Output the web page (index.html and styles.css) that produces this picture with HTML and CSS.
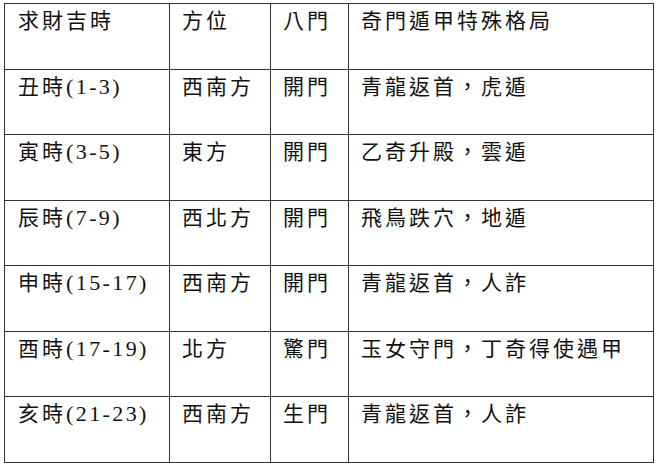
FILE: index.html
```html
<!DOCTYPE html>
<html lang="zh-Hant">
<head>
<meta charset="utf-8">
<title>求財吉時</title>
<link rel="stylesheet" href="styles.css">
</head>
<body>
<table class="grid">
  <colgroup>
    <col class="c-time">
    <col class="c-dir">
    <col class="c-gate">
    <col class="c-pattern">
  </colgroup>
  <tr><td>求財吉時</td><td>方位</td><td>八門</td><td>奇門遁甲特殊格局</td></tr>
  <tr><td>丑時<span class="num">(1-3)</span></td><td>西南方</td><td>開門</td><td>青龍返首，虎遁</td></tr>
  <tr><td>寅時<span class="num">(3-5)</span></td><td>東方</td><td>開門</td><td>乙奇升殿，雲遁</td></tr>
  <tr><td>辰時<span class="num">(7-9)</span></td><td>西北方</td><td>開門</td><td>飛鳥跌穴，地遁</td></tr>
  <tr><td>申時<span class="num">(15-17)</span></td><td>西南方</td><td>開門</td><td>青龍返首，人詐</td></tr>
  <tr><td>酉時<span class="num">(17-19)</span></td><td>北方</td><td>驚門</td><td>玉女守門，丁奇得使遇甲</td></tr>
  <tr><td>亥時<span class="num">(21-23)</span></td><td>西南方</td><td>生門</td><td>青龍返首，人詐</td></tr>
</table>
</body>
</html>
```

FILE: styles.css
```css
html, body {
  margin: 0;
  padding: 0;
  background: #ffffff;
}

body {
  padding: 3px 0 0 4px;
  font-family: "Liberation Serif", "Noto Sans CJK TC", serif;
  color: #111111;
}

.grid {
  border-collapse: collapse;
  table-layout: fixed;
  width: 649px;
  height: 460px;
}

.c-time { width: 165px; }
.c-dir { width: 101px; }
.c-gate { width: 78px; }
.c-pattern { width: 305px; }

.grid td {
  border: 1px solid #333333;
  vertical-align: top;
  padding: 3px 0 0 12px;
  font-family: "Liberation Serif", "Noto Sans CJK TC", serif;
  font-size: 21px;
  line-height: 28px;
  letter-spacing: 3px;
  white-space: nowrap;
}

.grid td:first-child {
  padding-left: 13px;
}

.num {
  letter-spacing: 2.4px;
  font-size: 22px;
}
```
